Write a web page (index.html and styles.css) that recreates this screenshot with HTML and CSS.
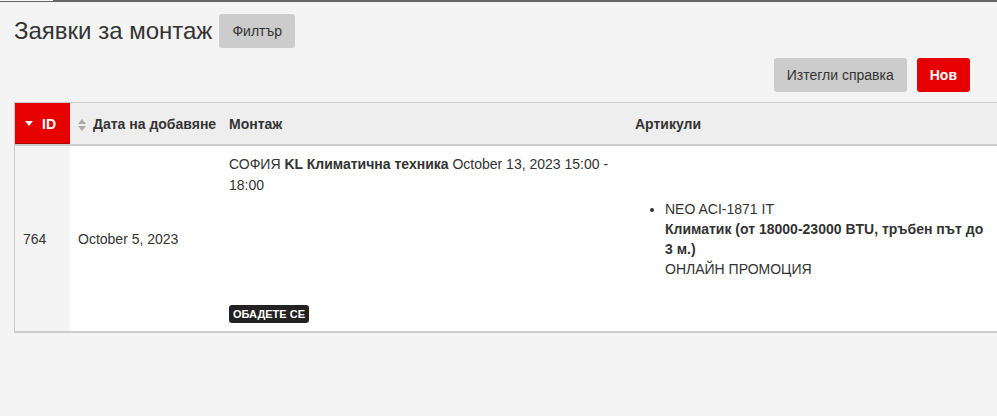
FILE: index.html
```html
<!DOCTYPE html>
<html lang="bg">
<head>
    <meta charset="UTF-8">
    <meta name="viewport" content="width=device-width, initial-scale=1.0">
    <title>Заявки за монтаж</title>
    <link rel="stylesheet" href="styles.css">
</head>
<body>

    <div class="topbar">
        <div class="topbar-left"></div>
        <div class="topbar-right"></div>
    </div>

    <div class="page">
        <div class="title-row">
            <h1>Заявки за монтаж</h1>
            <button class="btn">Филтър</button>
        </div>

        <div class="actions">
            <button class="btn">Изтегли справка</button>
            <button class="btn btn-red">Нов</button>
        </div>

        <table class="orders">
            <thead>
                <tr>
                    <th class="col-id sorted">
                        <span class="sort-down"></span>ID
                    </th>
                    <th class="col-date">
                        <span class="sort-both"><span class="up"></span><span class="down"></span></span>Дата на добавяне
                    </th>
                    <th class="col-mount">Монтаж</th>
                    <th>Артикули</th>
                </tr>
            </thead>
            <tbody>
                <tr>
                    <td class="col-id sorted">764</td>
                    <td>October 5, 2023</td>
                    <td class="mount">
                        <div class="mount-box">
                            <div>СОФИЯ <b>KL Климатична техника</b> October 13, 2023 15:00 - 18:00</div>
                            <div class="badge-row"><span class="badge">Обадете се</span></div>
                        </div>
                    </td>
                    <td>
                        <ul class="items">
                            <li>NEO ACI-1871 IT<br>
                                <b>Климатик (от 18000-23000 BTU, тръбен път до 3 м.)</b><br>
                                ОНЛАЙН ПРОМОЦИЯ
                            </li>
                        </ul>
                    </td>
                </tr>
            </tbody>
        </table>
    </div>

</body>
</html>
```

FILE: styles.css
```css
html {
    overflow: hidden;
}

body {
    margin: 0;
    background-color: #f4f4f4;
    color: #333;
    font-family: "Liberation Sans", Arial, sans-serif;
    font-size: 14px;
}

.topbar {
    display: flex;
    height: 2px;
}

.topbar-left {
    width: 53px;
    border-bottom: 1px solid #666;
}

.topbar-right {
    flex: 1;
    background-color: #666;
}

.page {
    padding-left: 14px;
}

.title-row {
    display: flex;
    align-items: center;
    gap: 7px;
    padding-top: 12px;
}

h1 {
    margin: 0;
    font-size: 24px;
    font-weight: normal;
}

.btn {
    height: 34px;
    padding: 0 13px;
    border: none;
    border-radius: 3px;
    background-color: #ccc;
    color: #333;
    font-family: inherit;
    font-size: 14px;
}

.btn-red {
    background-color: #e60000;
    color: #fff;
    font-weight: bold;
}

.actions {
    display: flex;
    justify-content: flex-end;
    gap: 10px;
    margin-top: 10px;
    padding-right: 27px;
}

.orders {
    width: 985px;
    margin-top: 10px;
    border-collapse: collapse;
    table-layout: fixed;
    border: 1px solid #ccc;
    border-bottom-width: 2px;
    background-color: #fff;
}

.orders th {
    height: 41px;
    padding: 0 8px;
    text-align: left;
    background-color: #eee;
    border-bottom: 2px solid #ccc;
    white-space: nowrap;
}

.orders th.sorted {
    background-color: #e60000;
    color: #fff;
    box-shadow: inset 0 -1px #a00;
}

.orders td {
    padding: 8px;
    vertical-align: middle;
    line-height: 20px;
}

.orders td.sorted {
    background-color: #f4f4f4;
}

.col-id {
    width: 39px;
}

.col-date {
    width: 135px;
}

.col-mount {
    width: 390px;
}

.sort-down {
    display: inline-block;
    margin: 0 9px 2px 2px;
    border-left: 4px solid transparent;
    border-right: 4px solid transparent;
    border-top: 5px solid #fff;
    vertical-align: middle;
}

.sort-both {
    display: inline-flex;
    flex-direction: column;
    gap: 2px;
    margin-right: 7px;
    vertical-align: middle;
}

.sort-both .up {
    border-left: 4px solid transparent;
    border-right: 4px solid transparent;
    border-bottom: 5px solid #aaa;
}

.sort-both .down {
    border-left: 4px solid transparent;
    border-right: 4px solid transparent;
    border-top: 5px solid #aaa;
}

.mount-box {
    display: flex;
    flex-direction: column;
    justify-content: space-between;
    height: 169px;
    line-height: 21px;
}

.badge-row {
    display: flex;
}

.badge {
    padding: 0 4px;
    border-radius: 3px;
    background-color: #222;
    color: #fff;
    font-size: 11px;
    font-weight: bold;
    line-height: 18px;
    text-transform: uppercase;
}

.items {
    margin: 0;
    padding-left: 30px;
}
```
